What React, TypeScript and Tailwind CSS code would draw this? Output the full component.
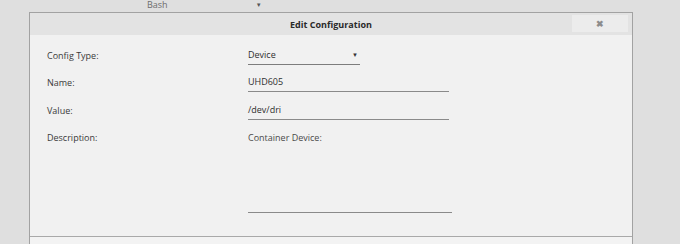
const font = "font-['Open_Sans','Noto_Sans',sans-serif]";

function Row({ label, children, className = "" }: { label: string; children: React.ReactNode; className?: string }) {
  return (
    <div className={`flex items-start ${className}`}>
      <div className="w-[201px] shrink-0 pt-[6px] text-[9px] leading-[10px] text-[#3a3a3a]">{label}</div>
      {children}
    </div>
  );
}

export default function App() {
  return (
    <div className={`h-[244px] w-[680px] overflow-hidden bg-[#dfdfdf] ${font}`}>
      {/* background form behind the dialog */}
      <div className="flex h-[12px] items-start">
        <span className="ml-[147px] text-[9px] leading-[10px] text-[#6d6d6d]">Bash</span>
        <span className="ml-[88px] text-[6px] leading-[10px] text-[#555]">▼</span>
      </div>

      <div className="ml-[29px] w-[604px] border border-[#a2a2a2] bg-[#f1f1f1]">
        <div className="relative flex h-[22px] items-center justify-center bg-[#e3e3e3] pt-[2px]">
          <span className="text-[9px] font-bold text-[#2a2a2a]">Edit Configuration</span>
          <button className="absolute right-[4px] top-[2px] flex h-[17px] w-[56px] items-center justify-center bg-[#ececec] text-[9px] font-bold leading-none text-[#8c8c8c]">
            ✖
          </button>
        </div>

        <div className="pl-[17px] pt-[10px] pb-[23px]">
          <Row label="Config Type:">
            <div className="flex h-[20px] w-[112px] items-center justify-between border-b border-[#7d7d7d] pr-[2px] pt-[1px] text-[9px] text-[#2f2f2f]">
              <span>Device</span>
              <span className="text-[6px] text-[#333]">▼</span>
            </div>
          </Row>
          <Row label="Name:" className="mt-[7px]">
            <div className="flex h-[20px] w-[201px] items-center border-b border-[#8a8a8a] pt-[1px] text-[9px] text-[#2f2f2f]">UHD605</div>
          </Row>
          <Row label="Value:" className="mt-[8px]">
            <div className="flex h-[20px] w-[201px] items-center border-b border-[#8a8a8a] pt-[1px] text-[9px] text-[#2f2f2f]">/dev/dri</div>
          </Row>
          <Row label="Description:" className="mt-[7px]">
            <div className="h-[86px] w-[204px] border-b border-[#8a8a8a] pt-[6px] text-[9px] leading-[10px] text-[#4a4a4a]">
              Container Device:
            </div>
          </Row>
        </div>

        <div className="h-[12px] border-t border-[#a9a9a9] bg-[#f3f3f3]" />
      </div>
    </div>
  );
}
